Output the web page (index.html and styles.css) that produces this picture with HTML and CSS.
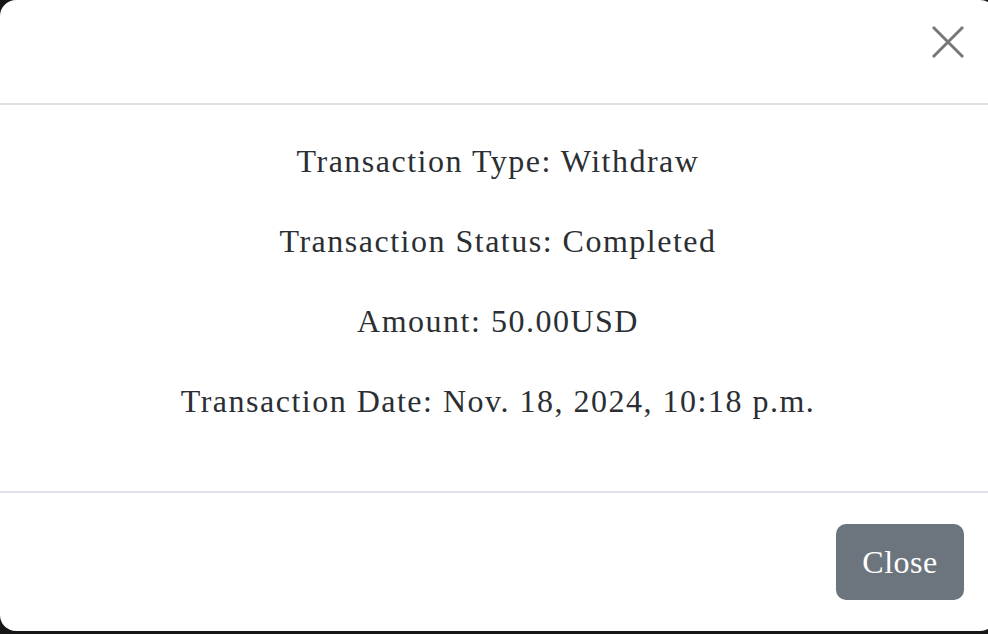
FILE: index.html
```html
<!DOCTYPE html>
<html lang="en">
<head>
<meta charset="utf-8">
<title>Transaction</title>
<link rel="stylesheet" href="styles.css">
</head>
<body>
<div class="modal">
  <div class="modal-header">
    <button class="btn-close" type="button" aria-label="Close">
      <svg viewBox="0 0 34 34" width="34" height="34"><path d="M2 2L32 32M32 2L2 32" stroke="#777" stroke-width="3" fill="none"/></svg>
    </button>
  </div>
  <div class="modal-body">
    <p>Transaction Type: Withdraw</p>
    <p>Transaction Status: Completed</p>
    <p>Amount: 50.00USD</p>
    <p>Transaction Date: Nov. 18, 2024, 10:18 p.m.</p>
  </div>
  <div class="modal-footer">
    <button class="btn" type="button">Close</button>
  </div>
</div>
</body>
</html>
```
FILE: styles.css
```css
html, body {
  margin: 0;
  padding: 0;
  height: 100%;
  overflow: hidden;
}
body {
  background: #161616;
  font-family: "Liberation Serif", "Times New Roman", serif;
  color: #2b2f33;
}
.modal {
  width: 996px;
  height: 631px;
  background: #fff;
  border-radius: 16px;
  display: flex;
  flex-direction: column;
  box-sizing: border-box;
}
.modal-header {
  height: 105px;
  box-sizing: border-box;
  border-bottom: 2px solid #dee2e6;
  display: flex;
  justify-content: flex-end;
  align-items: flex-start;
  padding: 25px 31px 0 0;
}
.btn-close {
  border: 0;
  background: transparent;
  padding: 0;
  margin: 0;
  width: 34px;
  height: 34px;
  display: block;
}
.btn-close svg { display: block; }
.modal-body {
  padding: 32px;
  text-align: center;
  font-size: 32px;
  line-height: 48px;
  letter-spacing: 1.5px;
  box-sizing: border-box;
  height: 388px;
  border-bottom: 2px solid #dee2e6;
}
.modal-body p {
  margin: 0 0 32px;
}
.modal-footer {
  flex: 1;
  display: flex;
  justify-content: flex-end;
  align-items: flex-start;
  padding: 31px 32px 0 0;
}
.btn {
  width: 128px;
  height: 76px;
  background: #6c757d;
  color: #fff;
  border: 0;
  border-radius: 10px;
  font-family: "Liberation Serif", "Times New Roman", serif;
  font-size: 32px;
  letter-spacing: 0.5px;
  padding: 0;
}
```
